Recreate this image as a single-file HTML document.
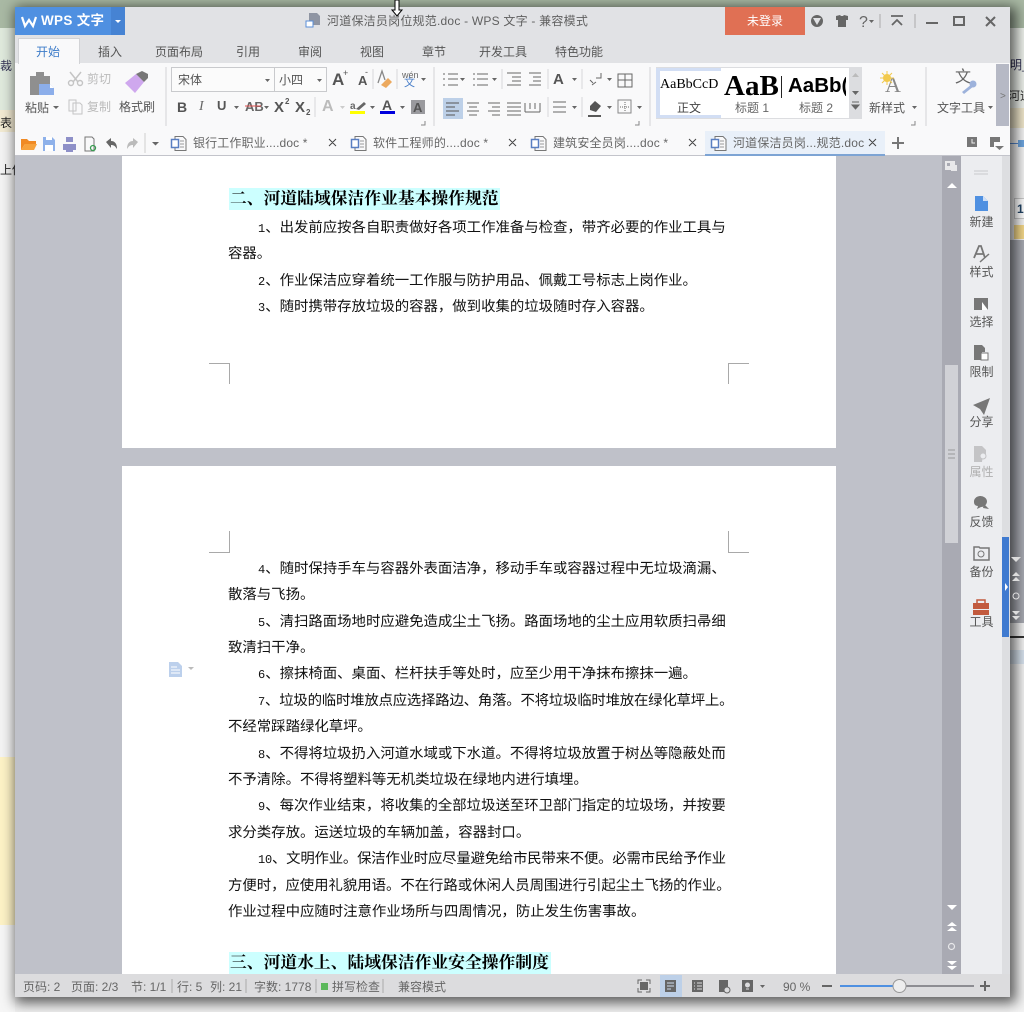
<!DOCTYPE html>
<html lang="zh"><head><meta charset="utf-8"><title>WPS 文字</title>
<style>
html,body{margin:0;padding:0}
body{width:1024px;height:1012px;overflow:hidden;position:relative;background:#f1f1f1;font-family:"Liberation Sans","Noto Sans CJK SC",sans-serif;}
.b{position:absolute}
.t{position:absolute;white-space:nowrap;line-height:16px;font-size:12px;color:#555;margin-top:1px}
.p{position:absolute;white-space:nowrap;line-height:20px;font-size:14.4px;color:#111;font-family:"Liberation Serif","WenQuanYi Zen Hei","Noto Sans CJK SC",sans-serif;text-rendering:geometricPrecision;margin-top:1px}
.p i{font-style:normal;font-family:"Liberation Mono",monospace;font-size:12px}
.h{position:absolute;white-space:nowrap;left:229px;padding-left:1px;height:22px;line-height:22px;background:#ccffff;color:#000;font-weight:bold;font-size:16.8px;font-family:"Liberation Serif","Noto Serif CJK SC",serif;text-rendering:geometricPrecision}
.c{text-align:center;width:41px;left:961px;color:#555;font-size:12px}
svg{position:absolute;left:0;top:0}
</style></head><body>

<!-- background behind the window -->
<div class="b" style="left:0;top:0;width:1024px;height:28px;background:#a9b9a4"></div>
<div class="b" style="left:0;top:28px;width:15px;height:82px;background:#dfe9dc"></div>
<div class="b" style="left:0;top:110px;width:15px;height:22px;background:#f2ead2"></div>
<div class="b" style="left:0;top:132px;width:15px;height:625px;background:#f3f3f3"></div>
<div class="b" style="left:0;top:757px;width:15px;height:168px;background:#fdf2c6"></div>
<div class="b" style="left:0;top:925px;width:15px;height:87px;background:#f6f6f6"></div>
<div class="b" style="left:1010px;top:28px;width:14px;height:80px;background:#eef2ec"></div>
<div class="b" style="left:1010px;top:108px;width:14px;height:20px;background:#f1e8cc"></div>
<div class="b" style="left:1010px;top:128px;width:14px;height:112px;background:#f6f6f6"></div>
<div class="b" style="left:1010px;top:240px;width:14px;height:383px;background:#a9abb3"></div>
<div class="b" style="left:1010px;top:623px;width:14px;height:389px;background:#f4f4f4"></div>
<div class="b" style="left:1010px;top:636px;width:14px;height:2px;background:#333"></div>
<div class="b" style="left:1010px;top:650px;width:14px;height:14px;background:#d8e3ef"></div>
<div class="b" style="left:1014px;top:198px;width:12px;height:19px;background:#fff;border:1px solid #ccc"></div>
<div class="b" style="left:1014px;top:225px;width:10px;height:14px;background:#f5d98a"></div>
<div class="b" style="left:1010px;top:143px;width:8px;height:1px;background:#5a8fd8"></div>
<div class="b" style="left:1018px;top:140px;width:6px;height:7px;background:#6ea6e0"></div>
<div class="t" style="left:0;top:57px;color:#335">裁</div>
<div class="t" style="left:0;top:114px;color:#222">表</div>
<div class="t" style="left:0;top:161px;color:#222">上传</div>
<div class="t" style="left:1010px;top:56px;color:#335">明_</div>
<div class="t" style="left:1008px;top:87px;color:#333">河道</div>
<div class="t" style="left:1017px;top:200px;color:#246;font-weight:bold">1</div>

<!-- window -->
<div class="b" style="left:15px;top:7px;width:995px;height:990px;background:#dedfe2;box-shadow:3px 3px 12px 3px rgba(0,0,0,.62)"></div>
<div class="b" style="left:15px;top:7px;width:995px;height:56px;background:#e1e2e5"></div>
<div class="b" style="left:15px;top:63px;width:995px;height:93px;background:#f9f9fa"></div>
<div class="b" style="left:15px;top:155px;width:995px;height:1px;background:#c3c4cb"></div>
<div class="b" style="left:15px;top:7px;width:110px;height:28px;background:#4f90e1"></div>
<div class="b" style="left:111px;top:7px;width:14px;height:28px;background:#4683d3"></div>
<div class="b" style="left:725px;top:7px;width:80px;height:28px;background:#e07054"></div>
<div class="b" style="left:18px;top:38px;width:60px;height:25px;background:#f9f9fa;border:1px solid #d2d3d6;border-bottom:0"></div>
<div class="b" style="left:996px;top:64px;width:13px;height:62px;background:#b6b9c5"></div>
<div class="b" style="left:705px;top:131px;width:180px;height:23px;background:#e9f0f9;border-bottom:2px solid #7da4d4"></div>

<!-- document area -->
<div class="b" style="left:15px;top:156px;width:927px;height:818px;background:#bfc1c9"></div>
<div class="b" style="left:122px;top:156px;width:714px;height:292px;background:#fff"></div>
<div class="b" style="left:122px;top:466px;width:714px;height:508px;background:#fff"></div>
<div class="b" style="left:942px;top:156px;width:19px;height:818px;background:#a9aab3"></div>
<div class="b" style="left:945px;top:365px;width:13px;height:178px;background:#d0d1d6"></div>
<div class="b" style="left:961px;top:156px;width:41px;height:818px;background:#ecedf0"></div>
<div class="b" style="left:1002px;top:156px;width:7px;height:818px;background:#dddee1"></div>
<div class="b" style="left:1002px;top:537px;width:7px;height:100px;background:#3f7ad0"></div>
<div class="b" style="left:15px;top:974px;width:995px;height:23px;background:#dcdcde"></div>
<div class="b" style="left:660px;top:975px;width:22px;height:22px;background:#bdd0e8"></div>

<!-- style gallery -->
<div class="b" style="left:656px;top:67px;width:206px;height:52px;background:#dcdde0"></div>
<div class="b" style="left:656px;top:68px;width:65px;height:50px;background:#d2def4"></div>
<div class="b" style="left:660px;top:71px;width:61px;height:44px;background:#fff"></div>
<div class="b" style="left:721px;top:68px;width:128px;height:50px;background:#fff;overflow:hidden">
 <div style="position:absolute;left:3px;top:0;font:bold 29px/36px 'Liberation Serif',serif;color:#000;white-space:nowrap">AaB</div>
 <div style="position:absolute;left:60px;top:8px;width:1px;height:22px;background:#222"></div>
 <div style="position:absolute;left:67px;top:3px;font:bold 20.500px/30px 'Liberation Sans',sans-serif;color:#000;white-space:nowrap">AaBb(</div>
 <div style="position:absolute;left:125px;top:0;width:3px;height:50px;background:#fff"></div>
</div>
<div class="t" style="left:660px;top:76px;font:14px/16px 'Liberation Serif',serif;color:#000">AaBbCcD</div>
<div class="t" style="left:677px;top:99px;color:#444">正文</div>
<div class="t" style="left:735px;top:99px;color:#666">标题 1</div>
<div class="t" style="left:799px;top:99px;color:#666">标题 2</div>

<!-- title -->
<div class="t" style="left:41px;top:12px;color:#fff;font-size:13.500px;font-weight:bold;letter-spacing:.3px">WPS 文字</div>
<div class="t" style="left:327px;top:12px;color:#606060;letter-spacing:.22px">河道保洁员岗位规范.doc - WPS 文字 - 兼容模式</div>
<div class="t" style="left:747px;top:12px;color:#fff">未登录</div>

<!-- tabs -->
<div class="t" style="left:36px;top:43px;color:#3d7cc9">开始</div>
<div class="t" style="left:98px;top:43px">插入</div>
<div class="t" style="left:155px;top:43px">页面布局</div>
<div class="t" style="left:236px;top:43px">引用</div>
<div class="t" style="left:298px;top:43px">审阅</div>
<div class="t" style="left:360px;top:43px">视图</div>
<div class="t" style="left:422px;top:43px">章节</div>
<div class="t" style="left:479px;top:43px">开发工具</div>
<div class="t" style="left:555px;top:43px">特色功能</div>

<!-- ribbon text -->
<div class="b" style="left:171px;top:67px;width:154px;height:23px;border:1px solid #c9cacd;background:#fbfbfb"></div>
<div class="b" style="left:274px;top:68px;width:1px;height:23px;background:#c9cacd"></div>
<div class="t" style="left:178px;top:71px">宋体</div>
<div class="t" style="left:279px;top:71px">小四</div>
<div class="t" style="left:25px;top:99px">粘贴</div>
<div class="t" style="left:87px;top:70px;color:#bbb">剪切</div>
<div class="t" style="left:87px;top:98px;color:#bbb">复制</div>
<div class="t" style="left:119px;top:98px">格式刷</div>
<div class="t" style="left:869px;top:99px">新样式</div>
<div class="t" style="left:937px;top:99px">文字工具</div>
<div class="t" style="left:402px;top:66px;font-size:9px;color:#666">wén</div>
<div class="t" style="left:404px;top:74px;font-size:11px;color:#4a7fc9">文</div>
<div class="t" style="left:177px;top:98px;font-weight:bold;font-size:14px;color:#555">B</div>
<div class="t" style="left:199px;top:98px;font-style:italic;font-size:14px;font-family:'Liberation Serif',serif;color:#666">I</div>
<div class="t" style="left:217px;top:97px;font-weight:bold;font-size:13px;color:#555">U</div>
<div class="t" style="left:245px;top:98px;font-size:13px;color:#666;font-weight:bold">AB</div>
<div class="t" style="left:274px;top:99px;font-weight:bold;font-size:15px">X</div>
<div class="t" style="left:285px;top:93px;font-size:8px;font-weight:bold">2</div>
<div class="t" style="left:295px;top:99px;font-weight:bold;font-size:15px">X</div>
<div class="t" style="left:306px;top:104px;font-size:8px;font-weight:bold">2</div>
<div class="t" style="left:332px;top:71px;font-weight:bold;font-size:17px">A</div>
<div class="t" style="left:358px;top:72px;font-weight:bold;font-size:13px">A</div>
<div class="t" style="left:343px;top:64px;font-size:9px">+</div>
<div class="t" style="left:365px;top:63px;font-size:9px">-</div>
<div class="t" style="left:322px;top:98px;font-weight:bold;font-size:16px;color:#bbb">A</div>
<div class="t" style="left:553px;top:71px;font-weight:bold;font-size:15px">A</div>
<div class="t" style="left:885px;top:75px;font:22px/18px 'Liberation Serif',serif;color:#888">A</div>
<div class="t" style="left:955px;top:69px;font-size:16px;color:#666">文</div>
<div class="t" style="left:1000px;top:88px;color:#777;font-size:10px">&gt;</div>

<!-- doc tabs -->
<div class="t" style="left:193px;top:134px;color:#666;letter-spacing:.12px">银行工作职业....doc *</div>
<div class="t" style="left:373px;top:134px;color:#666;letter-spacing:.17px">软件工程师的....doc *</div>
<div class="t" style="left:553px;top:134px;color:#666;letter-spacing:.17px">建筑安全员岗....doc *</div>
<div class="t" style="left:733px;top:134px;color:#666;letter-spacing:.17px">河道保洁员岗...规范.doc</div>

<!-- document text -->
<div class="h" style="top:188px;width:270px">二、河道陆域保洁作业基本操作规范</div>
<div class="p" style="left:258px;top:217px"><i>1</i>、出发前应按各自职责做好各项工作准备与检查，带齐必要的作业工具与</div>
<div class="p" style="left:228px;top:243px">容器。</div>
<div class="p" style="left:258px;top:270px"><i>2</i>、作业保洁应穿着统一工作服与防护用品、佩戴工号标志上岗作业。</div>
<div class="p" style="left:258px;top:296px"><i>3</i>、随时携带存放垃圾的容器，做到收集的垃圾随时存入容器。</div>
<div class="p" style="left:258px;top:558px"><i>4</i>、随时保持手车与容器外表面洁净，移动手车或容器过程中无垃圾滴漏、</div>
<div class="p" style="left:228px;top:584px">散落与飞扬。</div>
<div class="p" style="left:258px;top:611px"><i>5</i>、清扫路面场地时应避免造成尘土飞扬。路面场地的尘土应用软质扫帚细</div>
<div class="p" style="left:228px;top:637px">致清扫干净。</div>
<div class="p" style="left:258px;top:663px"><i>6</i>、擦抹椅面、桌面、栏杆扶手等处时，应至少用干净抹布擦抹一遍。</div>
<div class="p" style="left:258px;top:690px;letter-spacing:-.2px"><i>7</i>、垃圾的临时堆放点应选择路边、角落。不将垃圾临时堆放在绿化草坪上。</div>
<div class="p" style="left:228px;top:716px">不经常踩踏绿化草坪。</div>
<div class="p" style="left:258px;top:743px"><i>8</i>、不得将垃圾扔入河道水域或下水道。不得将垃圾放置于树丛等隐蔽处而</div>
<div class="p" style="left:228px;top:769px">不予清除。不得将塑料等无机类垃圾在绿地内进行填埋。</div>
<div class="p" style="left:258px;top:795px"><i>9</i>、每次作业结束，将收集的全部垃圾送至环卫部门指定的垃圾场，并按要</div>
<div class="p" style="left:228px;top:822px">求分类存放。运送垃圾的车辆加盖，容器封口。</div>
<div class="p" style="left:258px;top:848px;letter-spacing:-.21px"><i>10</i>、文明作业。保洁作业时应尽量避免给市民带来不便。必需市民给予作业</div>
<div class="p" style="left:228px;top:875px;letter-spacing:-.03px">方便时，应使用礼貌用语。不在行路或休闲人员周围进行引起尘土飞扬的作业。</div>
<div class="p" style="left:228px;top:901px">作业过程中应随时注意作业场所与四周情况，防止发生伤害事故。</div>
<div class="h" style="top:952px;width:321px">三、河道水上、陆域保洁作业安全操作制度</div>

<!-- side panel labels -->
<div class="t c" style="top:213px">新建</div>
<div class="t c" style="top:263px">样式</div>
<div class="t c" style="top:313px">选择</div>
<div class="t c" style="top:363px">限制</div>
<div class="t c" style="top:413px">分享</div>
<div class="t c" style="top:463px;color:#b0b0b0">属性</div>
<div class="t c" style="top:513px">反馈</div>
<div class="t c" style="top:563px">备份</div>
<div class="t c" style="top:613px">工具</div>

<!-- status bar -->
<div class="t" style="left:23px;top:978px;color:#666">页码: 2</div>
<div class="t" style="left:71px;top:978px;color:#666">页面: 2/3</div>
<div class="t" style="left:131px;top:978px;color:#666">节: 1/1</div>
<div class="t" style="left:177px;top:978px;color:#666">行: 5</div>
<div class="t" style="left:210px;top:978px;color:#666">列: 21</div>
<div class="t" style="left:254px;top:978px;color:#666">字数: 1778</div>
<div class="t" style="left:332px;top:978px;color:#666">拼写检查</div>
<div class="t" style="left:398px;top:978px;color:#666">兼容模式</div>
<div class="t" style="left:783px;top:978px;color:#666">90 %</div>

<svg width="1024" height="1012" viewBox="0 0 1024 1012">
 <!-- cursor -->
 <path d="M395 0h4v10h3l-5 6-5-6h3z" fill="#fff" stroke="#000" stroke-width="1"/>
 <!-- W logo -->
 <path d="M22 17l3 9 4-6 4 6 3-9" fill="none" stroke="#fff" stroke-width="2.200"/>
 <path d="M115 20h6l-3 3z" fill="#fff"/>
 <!-- title doc icon -->
 <path d="M309 13h8l3 3v9h-11z" fill="#8f95a3"/><rect x="306" y="21" width="7" height="6" fill="#fff" stroke="#5a8fd8"/>
 <!-- title right icons -->
 <circle cx="817" cy="21" r="6" fill="#666"/><path d="M813 18l4 7 4-7z" fill="#e1e2e5"/>
 <path d="M836 16l4-1 1 1h2l1-1 4 1v4h-2v7h-8v-7h-2z" fill="#666"/>
 <text x="859" y="27" font-family="Liberation Sans" font-size="16" fill="#666">?</text>
 <path d="M869 20h5l-2.500 3z" fill="#666"/>
 <path d="M880 14v14M915 14v14" stroke="#aaa"/>
 <path d="M891 16h12M892 25l5-5 5 5" fill="none" stroke="#666" stroke-width="1.800"/>
 <path d="M926 23h12" stroke="#666" stroke-width="2"/>
 <rect x="954" y="17" width="10" height="8" fill="none" stroke="#666" stroke-width="2"/>
 <path d="M986 17l9 9M995 17l-9 9" stroke="#666" stroke-width="2"/>

 <!-- clipboard -->
 <path d="M30 76h6v-4h8v4h6v19H30z" fill="#8f8f8f"/><path d="M39 84h11l4 4v7H39z" fill="#8caeea"/><path d="M50 84l4 4h-4z" fill="#fff"/>
 <!-- cut -->
 <path d="M70 72l8 10M81 72l-8 10" stroke="#c4c4c4" stroke-width="1.500"/><circle cx="71" cy="83" r="2.500" fill="none" stroke="#c4c4c4" stroke-width="1.400"/><circle cx="80" cy="83" r="2.500" fill="none" stroke="#c4c4c4" stroke-width="1.400"/>
 <!-- copy -->
 <path d="M69 100h7v11h-7zM73 103h7l2 2v9h-9z" fill="#f9f9fa" stroke="#c4c4c4"/>
 <!-- format brush -->
 <path d="M125 83l11-9 8 8-9 11z" fill="#cfa8ee"/><path d="M136 74l6-3 6 3v4l-4 4z" fill="#777"/>
 <!-- group dividers -->
 <path d="M166 67v59M434 67v59M650 67v59M926 67v59" stroke="#d4d4d6"/>
 <path d="M373 69v20M397 69v20M315 97v20M502 69v20M548 69v20M582 69v20M548 97v20M582 97v20" stroke="#d8d8da"/>
 <!-- dropdown arrows -->
 <path fill="#666" d="M53 106h6l-3 3zM265 79h5l-2.500 3zM317 79h5l-2.500 3zM421 78h5l-2.500 3zM234 106h5l-2.500 3zM264 106h5l-2.500 3zM370 106h5l-2.500 3zM400 106h5l-2.500 3zM460 78h5l-2.500 3zM492 78h5l-2.500 3zM572 78h5l-2.500 3zM607 78h5l-2.500 3zM607 106h5l-2.500 3zM572 106h5l-2.500 3zM637 106h5l-2.500 3zM912 106h5l-2.500 3zM988 106h5l-2.500 3zM152 142h7l-3.500 3.500z"/>
 <path d="M340 106h5l-2.500 3z" fill="#ccc"/>
 <path d="M245 106h16" stroke="#e05050" stroke-width="1"/>
 <!-- eraser -->
 <path d="M378 83l4-12 3 9" fill="none" stroke="#888" stroke-width="1.300"/>
 <path d="M381 85l7-7 4 4-6 6z" fill="#eca95e"/>
 <!-- highlight/font colours -->
 <rect x="350" y="111" width="15" height="3" fill="#ff0"/><rect x="380" y="111" width="15" height="3" fill="#00d"/>
 <text x="350" y="109" font-family="Liberation Sans" font-size="10" font-weight="bold" fill="#666">a</text>
 <path d="M356 109l8-7 2 2-7 6z" fill="#666"/>
 <text x="382" y="110" font-family="Liberation Sans" font-size="14" font-weight="bold" fill="#555">A</text>
 <rect x="411" y="100" width="14" height="14" fill="#9a9a9e"/>
 <text x="413" y="112" font-family="Liberation Sans" font-size="13" font-weight="bold" fill="#555">A</text>
 <path d="M421 125h4v-4M635 125h4v-4M911 125h4v-4" stroke="#888" fill="none"/>
 <!-- lists, indents, alignment -->
 <rect x="443" y="98" width="20" height="21" fill="#bdd0e8"/>
 <g stroke="#666" fill="none">
  <path d="M448 74h10M448 79h10M448 85h10M477 74h11M477 79h11M477 85h11"/>
  <path d="M443 74h2M443 79h2M443 85h2M473 74h2M473 85h2M473 79h2"/>
  <path d="M507 73h14M512 77h9M512 81h9M507 85h14M529 73h12M533 77h8M533 81h8M529 85h12"/>
  <path d="M618 74h14v13h-14zM618 80h14M625 74v13"/>
  <path d="M601 73v5h-5M592 85l4-3M590 80l3 3"/>
  <path d="M446 103h13M446 107h9M446 111h13M446 115h9" stroke="#555"/>
  <path d="M467 103h12M469 107h8M467 111h12M469 115h8"/>
  <path d="M488 103h12M492 107h8M488 111h12M492 115h8"/>
  <path d="M507 103h14M507 107h14M507 111h14M507 115h14"/>
  <path d="M525 112h15M525 103v9M540 103v9M530 103v6M535 103v6"/>
  <path d="M553 102h13M553 107h13M553 112h13"/>
  <path d="M618 100h13v13h-13z" stroke="#888"/>
  <path d="M625 102v10M620 107h10" stroke-dasharray="1 1"/>
  <path d="M588 116h13" stroke="#222" stroke-width="1.500"/>
 </g>
 <path d="M590 106l5-5 6 5-5 6-6-2z" fill="#555"/>
 <!-- style scroll arrows -->
 <path d="M852 77h7l-3.500-4z" fill="#bbb"/><path d="M852 91h7l-3.500 4z" fill="#666"/><path d="M852 105h7l-3.500 4zM852 102h7" fill="#666" stroke="#666"/>
 <!-- new style spark + text tool -->
 <circle cx="887" cy="78" r="4" fill="#f2c94c"/><path d="M880 78h14M887 71v14M882 73l10 10M892 73l-10 10" stroke="#f2c94c"/>
 <path d="M962 92l10-8 2 2-10 8z" fill="#9db2db"/><circle cx="973" cy="84" r="3.500" fill="#9db2db"/>
 <!-- quick bar -->
 <path d="M21 139h6l2 2h7v3H25l-4 6z" fill="#f08a24"/><path d="M25 144h12l-3 6H21z" fill="#f7a23c"/>
 <path d="M43 137h9l3 3v11H43z" fill="#8eb1ea"/><rect x="45" y="145" width="8" height="6" fill="#fff"/><rect x="46" y="137" width="6" height="3" fill="#fff"/>
 <path d="M63 144h13v6h-3v-2h-7v2h-3z" fill="#8e90c8"/><rect x="66" y="137" width="7" height="5" fill="#8e90c8"/><rect x="66" y="148" width="7" height="4" fill="#8e90c8"/>
 <path d="M85 137h7l2 2v12H85z" fill="none" stroke="#777"/><circle cx="93" cy="148" r="2.500" fill="none" stroke="#3a9c52" stroke-width="1.300"/>
 <path d="M106 142l5-4v3c4 0 6 3 6 8-2-3-3-4-6-4v3z" fill="#666"/>
 <path d="M138 142l-5-4v3c-4 0-6 3-6 8 2-3 3-4 6-4v3z" fill="#bbb"/>
 <path d="M145 133v20" stroke="#cfcfcf"/>
 <g fill="#f9f9fa" stroke="#777">
  <path d="M175 136.500h8l3 3v11h-11zM355 136.500h8l3 3v11h-11zM535 136.500h8l3 3v11h-11zM715 136.500h8l3 3v11h-11z"/>
 </g>
 <g stroke="#999"><path d="M180 141h4M180 144h4M180 147h4M360 141h4M360 144h4M360 147h4M540 141h4M540 144h4M540 147h4M720 141h4M720 144h4M720 147h4"/></g>
 <g fill="#fff" stroke="#5a7fc2" stroke-width="1.500"><rect x="171.500" y="139.500" width="7" height="8"/><rect x="351.500" y="139.500" width="7" height="8"/><rect x="531.500" y="139.500" width="7" height="8"/><rect x="711.500" y="139.500" width="7" height="8"/></g>
 <path d="M329 139l7 7M336 139l-7 7M509 139l7 7M516 139l-7 7M689 139l7 7M696 139l-7 7M869 139l7 7M876 139l-7 7" stroke="#444"/>
 <path d="M892 143h12M898 137v12" stroke="#777" stroke-width="2"/>
 <path d="M967 137h10v10h-10z" fill="#777"/><path d="M972 139v4h3" stroke="#eee" fill="none"/>
 <path d="M990 137h10v5h-6v5h-4z" fill="#777"/><path d="M995 146h9l-4.500 4z" fill="#777"/>

 <!-- crop marks -->
 <path d="M209 363.500h20.500V384M749 363.500h-20.500V384M229.500 531v21.500H209M728.500 531v21.500H749" fill="none" stroke="#a9a9a9"/>
 <!-- note icon -->
 <path d="M169 662h9l4 4v11h-13z" fill="#bcd0ec"/><path d="M171 667h6M171 670h9M171 673h9" stroke="#fff"/>
 <path d="M188 667h6l-3 3z" fill="#bbb"/>

 <!-- scrollbar -->
 <rect x="945" y="161" width="10" height="9" fill="#e8e8ea"/><rect x="951" y="165" width="6" height="6" fill="#e8e8ea"/><path d="M947 163h3v3h-3z" fill="#a9aab3"/>
 <path d="M947 188h10l-5-5z" fill="#fff"/>
 <path d="M948 450h7M948 454h7M948 458h7" stroke="#999"/>
 <path d="M947 905h10l-5 5z" fill="#fff"/>
 <path d="M947 926l5-4 5 4zM947 931l5-4 5 4z" fill="#fff"/>
 <circle cx="951.500" cy="946.500" r="3" fill="none" stroke="#e8e8ea" stroke-width="1.200"/>
 <path d="M947 961l5 4 5-4zM947 966l5 4 5-4z" fill="#fff"/>
 <path d="M1005 583v8l3-4z" fill="#fff"/>
 <path d="M1011 557h10l-5 5z" fill="#ddd"/><path d="M1012 576l4-4 4 4zM1012 581l4-4 4 4z" fill="#ddd"/><circle cx="1016" cy="596" r="3" fill="none" stroke="#ddd"/><path d="M1012 611l4 4 4-4zM1012 616l4 4 4-4z" fill="#ddd"/>

 <!-- side panel icons -->
 <path d="M974 171h14M974 174h14" stroke="#c8c9cd"/>
 <path d="M975 196h8l5 5v10h-13z" fill="#4f90e1"/><path d="M983 196v5h5z" fill="#cfe0f7"/>
 <path d="M974 258l5-12h2l4 12M976 254h7" fill="none" stroke="#777" stroke-width="1.800"/><path d="M980 262l9-8" stroke="#777" stroke-width="1.500"/>
 <path d="M974 298h14v12h-14z" fill="#777"/><path d="M982 302v8h6z" fill="#fff"/>
 <path d="M974 345h8l3 3v4h-3v8h-8z" fill="#777"/><rect x="981" y="353" width="7" height="7" fill="#fff" stroke="#777"/>
 <path d="M973 405l17-7-6 17-4-6z" fill="#777"/>
 <path d="M974 446h8l4 4v4h-3l-1 8h-8z" fill="#c4c4c6"/><circle cx="983" cy="456" r="3" fill="#ecedf0" stroke="#c4c4c6"/>
 <path d="M974 502a6.500 5.500 0 1 1 7 5l-4 2 1-3c-3 0-4-2-4-4z" fill="#777"/><path d="M984 504l5 5-6-1z" fill="#777"/>
 <path d="M974 547h5l1 1h9v12h-15z" fill="none" stroke="#777" stroke-width="1.500"/><circle cx="981" cy="554" r="3" fill="none" stroke="#777"/>
 <path d="M973 603h16v6h-16zM973 610h16v5h-16z" fill="#c25a3e"/><path d="M977 603v-3h8v3" fill="none" stroke="#c25a3e" stroke-width="1.500"/>

 <!-- status bar -->
 <path d="M172 979v14M246 979v14M316 979v14M383 979v14" stroke="#aaa"/>
 <rect x="321" y="983" width="7" height="7" fill="#5cb85c"/>
 <path d="M638 984v-4h4M646 980h4v4M650 988v4h-4M642 992h-4v-4" fill="none" stroke="#666"/><rect x="640" y="982" width="8" height="8" fill="#666"/>
 <rect x="665" y="980" width="11" height="12" fill="#666"/><path d="M667 983h7M667 986h7M667 989h4" stroke="#cfdcee"/>
 <rect x="692" y="980" width="11" height="12" fill="#666"/><path d="M694 983h1M697 983h5M694 986h1M697 986h5M694 989h1M697 989h5" stroke="#dcdcde"/>
 <path d="M719 980h9v12h-9z" fill="#666"/><circle cx="727" cy="990" r="3" fill="#dcdcde" stroke="#666"/>
 <rect x="742" y="980" width="11" height="12" fill="#666"/><circle cx="747.500" cy="985" r="2.500" fill="#dcdcde"/><path d="M746 989h3" stroke="#dcdcde"/>
 <path d="M760 985h5l-2.500 3z" fill="#666"/>
 <path d="M822 986h10" stroke="#666" stroke-width="2"/>
 <path d="M840 986h54" stroke="#4f90e1" stroke-width="2"/><path d="M900 986h74" stroke="#8d8d92" stroke-width="2"/>
 <circle cx="899.500" cy="986" r="6.500" fill="#eee" stroke="#999"/>
 <path d="M980 986h10M985 981v10" stroke="#666" stroke-width="2"/>
</svg>
</body></html>
